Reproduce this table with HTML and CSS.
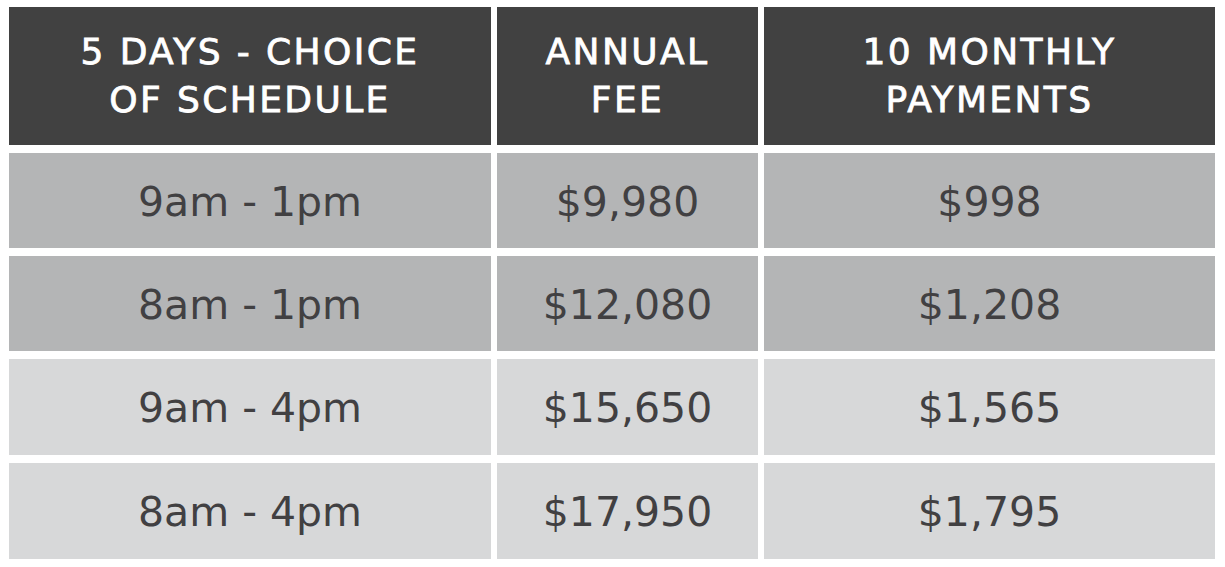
FILE: index.html
```html
<!DOCTYPE html>
<html lang="en">
<head>
<meta charset="utf-8">
<title>Tuition</title>
<link rel="stylesheet" href="styles.css">
</head>
<body>
<div class="fees">
  <div class="cell head">5 DAYS - CHOICE<br>OF SCHEDULE</div>
  <div class="cell head">ANNUAL<br>FEE</div>
  <div class="cell head">10 MONTHLY<br>PAYMENTS</div>

  <div class="cell mid">9am - 1pm</div>
  <div class="cell mid">$9,980</div>
  <div class="cell mid">$998</div>

  <div class="cell mid">8am - 1pm</div>
  <div class="cell mid">$12,080</div>
  <div class="cell mid">$1,208</div>

  <div class="cell light">9am - 4pm</div>
  <div class="cell light">$15,650</div>
  <div class="cell light">$1,565</div>

  <div class="cell light">8am - 4pm</div>
  <div class="cell light">$17,950</div>
  <div class="cell light">$1,795</div>
</div>
</body>
</html>
```
FILE: styles.css
```css
html, body {
  margin: 0;
  padding: 0;
  background: #ffffff;
}

body {
  font-family: "DejaVu Sans", "Liberation Sans", sans-serif;
}

.fees {
  display: grid;
  grid-template-columns: 482px 261px 451px;
  grid-template-rows: 138px 95px 95px 96px 96px;
  column-gap: 6px;
  row-gap: 8px;
  padding: 7px 0 0 9px;
}

.cell {
  display: flex;
  align-items: center;
  justify-content: center;
  text-align: center;
}

.head {
  background: #414141;
  color: #ffffff;
  font-weight: normal;
  font-size: 36px;
  line-height: 48px;
  letter-spacing: 2.4px;
  -webkit-text-stroke: 0.8px #ffffff;
}

.mid,
.light {
  color: #414042;
  font-size: 41px;
  padding-top: 2px;
  box-sizing: border-box;
}

.mid {
  background: #b4b5b6;
}

.light {
  background: #d7d8d9;
}
```
